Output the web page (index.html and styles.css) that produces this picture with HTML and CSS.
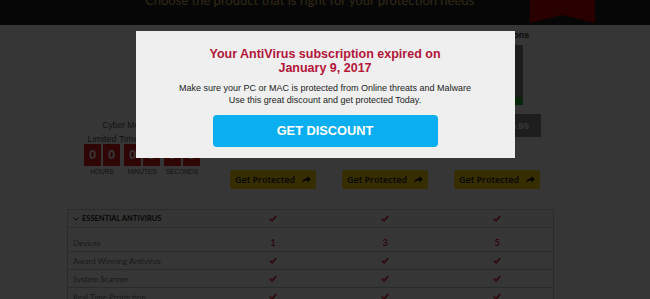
FILE: index.html
```html
<!DOCTYPE html>
<html lang="en">
<head>
  <meta charset="UTF-8">
  <meta name="viewport" content="width=device-width, initial-scale=1.0">
  <title>Choose your protection</title>
  <link rel="stylesheet" href="styles.css">
</head>
<body>
  <header class="top">
    <h2>Choose the product that is right for your protection needs</h2>
    <div class="ribbon"></div>
  </header>

  <main class="page">
    <div class="plans">
      <div class="deal">
        <div class="deal-title">Cyber Monday Deals</div>
        <div class="deal-sub">Limited Time Offer Ends In:</div>
        <div class="countdown">
          <div class="unit"><div class="digits"><span>0</span><span>0</span></div>Hours</div>
          <div class="unit"><div class="digits"><span>0</span><span>0</span></div>Minutes</div>
          <div class="unit"><div class="digits"><span>0</span><span>0</span></div>Seconds</div>
        </div>
      </div>

      <div class="plan">
        <div class="plan-name">Antivirus Plus</div>
        <div class="plan-image"></div>
        <div class="plan-tag"></div>
        <div class="price">PRICE: $30.95</div>
        <a class="get" href="#">Get Protected
          <svg width="9" height="7" viewBox="0 0 9 7"><path d="M5.2 0 L9 3.3 L5.2 6.6 V4.7 C3 4.6 1.4 5.2 0 6.8 C0.4 3.9 2.2 2.3 5.2 2 Z" fill="#222"/></svg>
        </a>
      </div>
      <div class="plan">
        <div class="plan-name">Internet Security</div>
        <div class="plan-image"></div>
        <div class="plan-tag"></div>
        <div class="price">PRICE: $50.95</div>
        <a class="get" href="#">Get Protected
          <svg width="9" height="7" viewBox="0 0 9 7"><path d="M5.2 0 L9 3.3 L5.2 6.6 V4.7 C3 4.6 1.4 5.2 0 6.8 C0.4 3.9 2.2 2.3 5.2 2 Z" fill="#222"/></svg>
        </a>
      </div>
      <div class="plan">
        <div class="plan-name">Total Solutions</div>
        <div class="plan-image"></div>
        <div class="plan-tag"></div>
        <div class="price">PRICE: $70.95</div>
        <a class="get" href="#">Get Protected
          <svg width="9" height="7" viewBox="0 0 9 7"><path d="M5.2 0 L9 3.3 L5.2 6.6 V4.7 C3 4.6 1.4 5.2 0 6.8 C0.4 3.9 2.2 2.3 5.2 2 Z" fill="#222"/></svg>
        </a>
      </div>
    </div>

    <div class="features">
      <div class="feature-head">
        <div class="label">
          <svg width="6" height="4" viewBox="0 0 6 4"><path d="M0.5 0.5 L3 3.2 L5.5 0.5" stroke="#222" stroke-width="1" fill="none"/></svg>
          Essential Antivirus
        </div>
        <div class="cell"><svg class="check" viewBox="0 0 10 8"><path d="M1 4.2 L3.8 6.8 L9 1"/></svg></div>
        <div class="cell"><svg class="check" viewBox="0 0 10 8"><path d="M1 4.2 L3.8 6.8 L9 1"/></svg></div>
        <div class="cell"><svg class="check" viewBox="0 0 10 8"><path d="M1 4.2 L3.8 6.8 L9 1"/></svg></div>
      </div>
      <div class="feature-list">
        <div class="feature-row">
          <div class="label">Devices</div>
          <div class="cell num">1</div>
          <div class="cell num">3</div>
          <div class="cell num">5</div>
        </div>
        <div class="feature-row">
          <div class="label">Award Winning Antivirus</div>
          <div class="cell"><svg class="check" viewBox="0 0 10 8"><path d="M1 4.2 L3.8 6.8 L9 1"/></svg></div>
          <div class="cell"><svg class="check" viewBox="0 0 10 8"><path d="M1 4.2 L3.8 6.8 L9 1"/></svg></div>
          <div class="cell"><svg class="check" viewBox="0 0 10 8"><path d="M1 4.2 L3.8 6.8 L9 1"/></svg></div>
        </div>
        <div class="feature-row">
          <div class="label">System Scanner</div>
          <div class="cell"><svg class="check" viewBox="0 0 10 8"><path d="M1 4.2 L3.8 6.8 L9 1"/></svg></div>
          <div class="cell"><svg class="check" viewBox="0 0 10 8"><path d="M1 4.2 L3.8 6.8 L9 1"/></svg></div>
          <div class="cell"><svg class="check" viewBox="0 0 10 8"><path d="M1 4.2 L3.8 6.8 L9 1"/></svg></div>
        </div>
        <div class="feature-row">
          <div class="label">Real Time Protection</div>
          <div class="cell"><svg class="check" viewBox="0 0 10 8"><path d="M1 4.2 L3.8 6.8 L9 1"/></svg></div>
          <div class="cell"><svg class="check" viewBox="0 0 10 8"><path d="M1 4.2 L3.8 6.8 L9 1"/></svg></div>
          <div class="cell"><svg class="check" viewBox="0 0 10 8"><path d="M1 4.2 L3.8 6.8 L9 1"/></svg></div>
        </div>
      </div>
    </div>
  </main>

  <div class="overlay">
    <div class="modal">
      <h1>Your AntiVirus subscription expired on<br>January 9, 2017</h1>
      <p>Make sure your PC or MAC is protected from Online threats and Malware<br>Use this great discount and get protected Today.</p>
      <a class="discount" href="#">GET DISCOUNT</a>
    </div>
  </div>
</body>
</html>
```

FILE: styles.css
```css
html, body {
  overflow: hidden;
}
body {
  margin: 0;
  background: #ffffff;
  font-family: "Liberation Sans", Arial, sans-serif;
  color: #555;
}

/* header band */
.top {
  height: 25px;
  background: #1c1c1c;
  display: flex;
  overflow: hidden;
}
.top h2 {
  margin: -8px 0 0 145px;
  font: 400 13px/16px Lato, sans-serif;
  color: #e0c060;
  white-space: nowrap;
}
.ribbon {
  width: 65px;
  height: 25px;
  margin-left: auto;
  margin-right: 55px;
  background: #c00000;
  clip-path: polygon(0 0, 100% 0, 100% 92%, 50% 60%, 0 92%);
}

/* plans */
.plans {
  display: grid;
  grid-template-columns: 150px repeat(3, 112px);
  margin-left: 67px;
}
.deal {
  padding-top: 95px;
  text-align: center;
}
.deal-title {
  font-size: 8.5px;
  line-height: 10px;
  color: #555;
}
.deal-sub {
  margin-top: 4px;
  font-size: 9px;
  line-height: 10px;
  color: #555;
}
.countdown {
  display: flex;
  justify-content: center;
  gap: 4px;
}
.unit {
  display: flex;
  flex-direction: column;
  align-items: center;
  font-size: 6.5px;
  line-height: 8px;
  text-transform: uppercase;
  color: #555;
}
.digits {
  display: flex;
  gap: 2px;
  margin-bottom: 2px;
}
.digits span {
  width: 17px;
  height: 22px;
  background: #e01818;
  color: #fff;
  font: bold 13px/22px "Liberation Sans", Arial, sans-serif;
}

.plan {
  display: flex;
  flex-direction: column;
  align-items: center;
  padding-top: 4px;
}
.plan-name {
  font: bold 9px/12px "Liberation Sans", Arial, sans-serif;
  color: #333;
  white-space: nowrap;
}
.plan-image {
  width: 52px;
  height: 52px;
  margin-top: 4px;
  background: linear-gradient(90deg, #e4e4e4 0 80%, #8a8a8a 80% 100%);
}
.plan-tag {
  width: 52px;
  height: 8px;
  background: #28b428;
}
.price {
  margin-top: 9px;
  width: 88px;
  height: 23px;
  background: #8c8c8c;
  color: #fff;
  font: bold 9.5px/23px "Liberation Sans", Arial, sans-serif;
  text-align: center;
  white-space: nowrap;
}
.get {
  margin-top: 33px;
  width: 86px;
  height: 19px;
  border-radius: 3px;
  background: #ffd200;
  display: flex;
  align-items: center;
  justify-content: center;
  gap: 7px;
  font: 600 9px "Open Sans", sans-serif;
  color: #222;
  text-decoration: none;
}

/* feature table */
.features {
  margin: 20px 0 0 67px;
  width: 485px;
  border-left: 1px solid #ccc;
  border-right: 1px solid #ccc;
}
.feature-head, .feature-row {
  display: grid;
  grid-template-columns: 149px repeat(3, 112px);
  align-items: center;
}
.feature-head {
  height: 17px;
  border-top: 1px solid #ccc;
  border-bottom: 1px solid #ccc;
  background: #fafafa;
}
.feature-head .label {
  display: flex;
  align-items: center;
  gap: 3px;
  padding-left: 5px;
  font: 700 7.5px Lato, sans-serif;
  text-transform: uppercase;
  color: #222;
}
.feature-list {
  padding-top: 6px;
}
.feature-row {
  height: 17px;
  border-bottom: 1px solid #ccc;
}
.feature-row .label {
  padding-left: 5px;
  font: 8px Lato, sans-serif;
  color: #777;
}
.cell {
  display: flex;
  justify-content: center;
}
.num {
  font: 700 9px Lato, sans-serif;
  color: #e0203a;
}
.check {
  width: 8px;
  height: 7px;
}
.check path {
  fill: none;
  stroke: #e0203a;
  stroke-width: 2;
}

/* popup */
.overlay {
  position: fixed;
  inset: 0;
  background: rgba(0, 0, 0, 0.79);
  display: flex;
  justify-content: center;
  align-items: flex-start;
}
.modal {
  margin-top: 31px;
  width: 379px;
  padding: 16px 0 11px;
  background: #efefef;
  text-align: center;
}
.modal h1 {
  margin: 0;
  font: bold 12.5px/14px "Liberation Sans", Arial, sans-serif;
  color: #b31539;
}
.modal p {
  margin: 7px 0 0;
  font-size: 9px;
  line-height: 12px;
  color: #222;
}
.discount {
  display: block;
  width: 225px;
  height: 32px;
  margin: 9px auto 0;
  border-radius: 4px;
  background: #0baeef;
  color: #fff;
  font: bold 12.8px/32px "Liberation Sans", Arial, sans-serif;
  text-decoration: none;
}
```
